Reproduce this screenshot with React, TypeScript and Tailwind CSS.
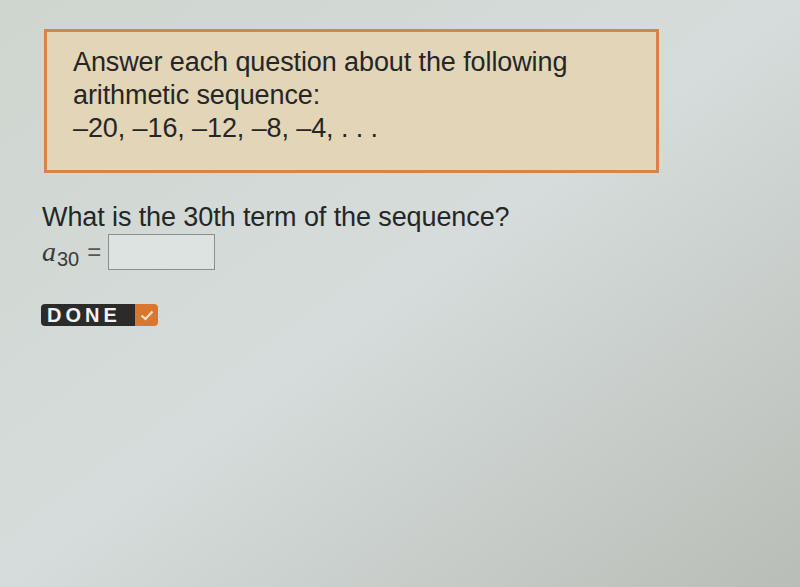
export default function App() {
  return (
    <div className="h-[587px] w-[800px] overflow-hidden bg-linear-to-br from-[#cfd6cf] via-[#d5dcdb] to-[#b9bdb7] font-['Liberation_Sans',Arial,sans-serif] text-[#262626]">
      <div className="pl-[44px] pt-[29px]">
        <div className="w-[615px] border-[3px] border-[#d9834a] bg-[#e3d5b8] pb-[25px] pl-[26px] pt-[14px] text-[27px] leading-[33px] tracking-[-0.1px]">
          <p>Answer each question about the following</p>
          <p>arithmetic sequence:</p>
          <p>–20, –16, –12, –8, –4, . . .</p>
        </div>
      </div>

      <div className="pl-[42px] pt-[28px]">
        <p className="text-[27px] leading-[32px] tracking-[-0.1px]">What is the 30th term of the sequence?</p>
        <div className="-mt-[2px] flex items-center">
          <span className="font-['Liberation_Serif',serif] text-[28px] italic text-[#3a3a3a]">
            a<sub className="ml-[1px] font-['Liberation_Sans',sans-serif] text-[20px] not-italic">30</sub>
          </span>
          <span className="ml-[8px] mr-[7px] text-[24px] text-[#555]">=</span>
          <input
            type="text"
            className="h-[36px] w-[107px] border border-[#8a8f8c] bg-[#dde3e1] outline-none"
          />
        </div>

        <button className="-ml-[1px] mt-[31px] flex h-[22px] items-stretch overflow-hidden rounded-[4px] text-[20px] font-bold tracking-[4px]">
          <span className="flex w-[94px] items-center bg-[#2b2b2b] pl-[6px] text-[#f2f2f2]">DONE</span>
          <span className="flex w-[23px] items-center justify-center bg-[#d9772f]">
            <svg width="14" height="11" viewBox="0 0 14 11">
              <path d="M1.5 5.5 L5.5 9 L12.5 1.5" fill="none" stroke="#f3e4d6" strokeWidth="2.2" />
            </svg>
          </span>
        </button>
      </div>
    </div>
  );
}
